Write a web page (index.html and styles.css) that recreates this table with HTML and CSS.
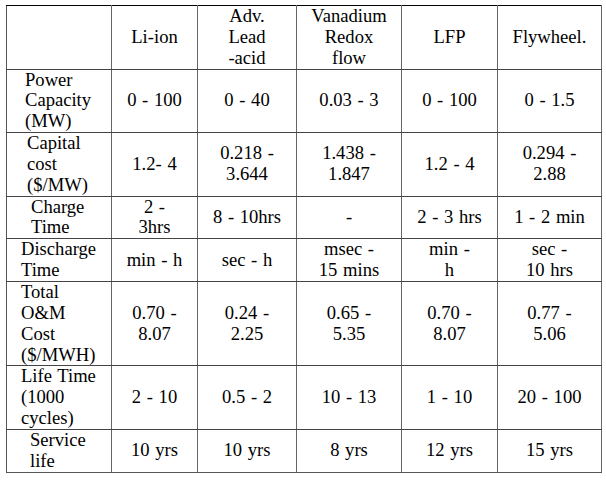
FILE: index.html
```html
<!DOCTYPE html>
<html>
<head>
<meta charset="utf-8">
<link rel="stylesheet" href="styles.css">
</head>
<body>
<table class="cmp">
  <colgroup>
    <col class="c1"><col class="c2"><col class="c3"><col class="c4"><col class="c5"><col class="c6">
  </colgroup>
  <tr class="head">
    <td class="lab"></td>
    <td>Li-ion</td>
    <td>Adv.<br>Lead<br>-acid</td>
    <td>Vanadium<br>Redox<br>flow</td>
    <td>LFP</td>
    <td>Flywheel.</td>
  </tr>
  <tr>
    <td class="lab i25">Power<br>Capacity<br>(MW)</td>
    <td>0 - 100</td>
    <td>0 - 40</td>
    <td>0.03 - 3</td>
    <td>0 - 100</td>
    <td>0 - 1.5</td>
  </tr>
  <tr>
    <td class="lab i27">Capital<br>cost<br>($/MW)</td>
    <td>1.2- 4</td>
    <td>0.218 -<br>3.644</td>
    <td>1.438 -<br>1.847</td>
    <td>1.2 - 4</td>
    <td>0.294 -<br>2.88</td>
  </tr>
  <tr>
    <td class="lab i32">Charge<br>Time</td>
    <td>2 -<br>3hrs</td>
    <td>8 - 10hrs</td>
    <td>-</td>
    <td>2 - 3 hrs</td>
    <td>1 - 2 min</td>
  </tr>
  <tr>
    <td class="lab i21">Discharge<br>Time</td>
    <td>min - h</td>
    <td>sec - h</td>
    <td>msec -<br>15 mins</td>
    <td>min -<br>h</td>
    <td>sec -<br>10 hrs</td>
  </tr>
  <tr>
    <td class="lab i21">Total<br>O&amp;M<br>Cost<br>($/MWH)</td>
    <td>0.70 -<br>8.07</td>
    <td>0.24 -<br>2.25</td>
    <td>0.65 -<br>5.35</td>
    <td>0.70 -<br>8.07</td>
    <td>0.77 -<br>5.06</td>
  </tr>
  <tr>
    <td class="lab i21">Life Time<br>(1000<br>cycles)</td>
    <td>2 - 10</td>
    <td>0.5 - 2</td>
    <td>10 - 13</td>
    <td>1 - 10</td>
    <td>20 - 100</td>
  </tr>
  <tr class="last">
    <td class="lab i30">Service<br>life</td>
    <td>10 yrs</td>
    <td>10 yrs</td>
    <td>8 yrs</td>
    <td>12 yrs</td>
    <td>15 yrs</td>
  </tr>
</table>
</body>
</html>
```

FILE: styles.css
```css
html, body {
  margin: 0;
  padding: 0;
  background: #ffffff;
}

.cmp {
  margin: 5px 0 0 6px;
  border-collapse: collapse;
  table-layout: fixed;
  width: 595px;
  font-family: "Liberation Serif", "Times New Roman", serif;
  font-size: 18.6px;
  line-height: 20.85px;
  color: #000;
  word-spacing: 1px;
}

.c1 { width: 105px; }
.c2 { width: 86px; }
.c3 { width: 99px; }
.c4 { width: 105px; }
.c5 { width: 96px; }
.c6 { width: 104px; }

.cmp td {
  border-left: 1px solid #666;
  border-right: 1px solid #666;
  border-top: 1px solid #444;
  border-bottom: 1px solid #444;
  padding: 0 2px;
  text-align: center;
  vertical-align: middle;
  white-space: nowrap;
}

.cmp tr.head td {
  border-top: 1px solid #000;
}

.cmp tr.last td {
  border-top: 1px solid #000;
  border-bottom: 1px solid #555;
}

.cmp td.lab {
  text-align: left;
  border-left: 1px solid #555;
}

.cmp td.i21 { padding-left: 14px; }
.cmp td.i25 { padding-left: 18px; }
.cmp td.i27 { padding-left: 20px; }
.cmp td.i30 { padding-left: 23px; }
.cmp td.i32 { padding-left: 24px; }
```
